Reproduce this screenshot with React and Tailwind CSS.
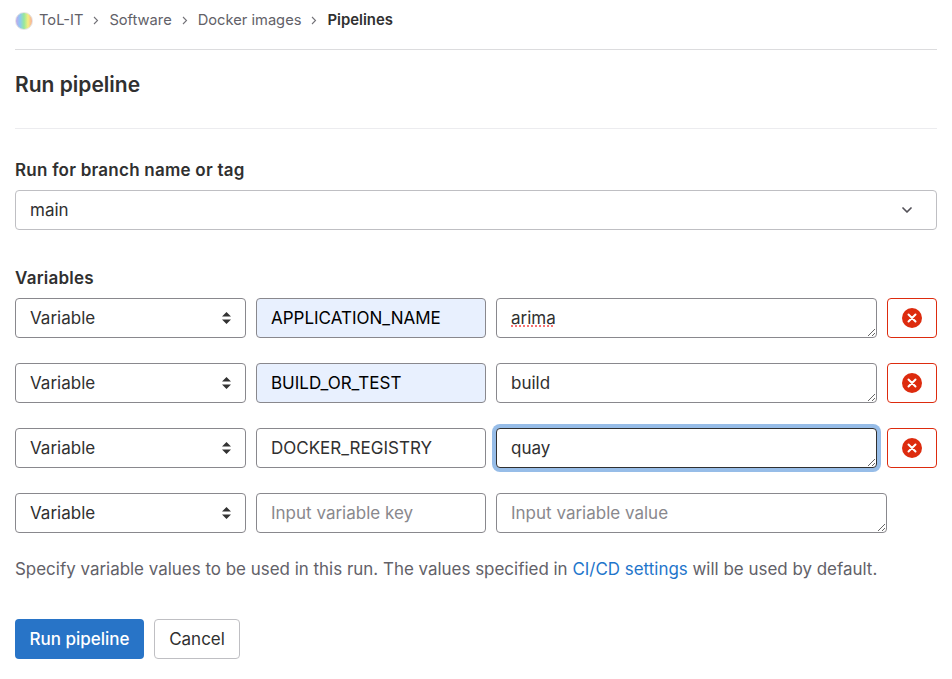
import React from "react";

const rows = [
  { name: "APPLICATION_NAME", value: "arima", autofill: true },
  { name: "BUILD_OR_TEST", value: "build", autofill: true },
  { name: "DOCKER_REGISTRY", value: "quay", focused: true },
];

const Chevron = () => (
  <svg width="6" height="9" viewBox="0 0 6 9" fill="none" className="shrink-0">
    <path d="M1 1 L4.5 4.5 L1 8" stroke="#737278" strokeWidth="1.1" />
  </svg>
);

const Crumb = ({ children }) => (
  <>
    <span>{children}</span>
    <Chevron />
  </>
);

const TypeSelect = () => (
  <div className="relative w-[231px] shrink-0">
    <select className="w-full h-10 appearance-none rounded border border-[#89888d] bg-white pl-[14px] pt-[2px] text-[17px] text-[#303030] outline-none">
      <option>Variable</option>
    </select>
    {/* up/down arrows */}
    <svg width="9" height="12" viewBox="0 0 9 12" className="absolute right-[15px] top-[14px] pointer-events-none">
      <path d="M4.5 0 L9 4.6 H0 Z M4.5 12 L0 7.4 H9 Z" fill="#333" />
    </svg>
  </div>
);

const RemoveButton = () => (
  <button className="w-[50px] h-10 shrink-0 flex items-center justify-center rounded border border-[#dd2b0e] bg-white">
    <svg width="20" height="20" viewBox="0 0 20 20">
      <circle cx="10" cy="10" r="10" fill="#dd2b0e" />
      <path d="M6.5 6.5 L13.5 13.5 M13.5 6.5 L6.5 13.5" stroke="#fff" strokeWidth="2" strokeLinecap="round" />
    </svg>
  </button>
);

export default function App() {
  return (
    <div className="min-h-[679px] bg-white px-[15px] text-[#303030] font-['Inter','Liberation_Sans',sans-serif]">
      {/* Breadcrumb */}
      <div className="h-[50px] flex items-center pb-[8px] border-b border-[#dcdcde] text-[14.7px] text-[#626168]">
        <div className="w-[18px] h-[18px] mr-[6px] rounded-full border border-[#e5e5e5] bg-[linear-gradient(90deg,#c4a8ec,#8cc8f4,#96e89c,#f4ee80,#f9ad98)]" />
        <div className="flex items-center gap-[10px]">
          <Crumb>ToL-IT</Crumb>
          <Crumb>Software</Crumb>
          <Crumb>Docker images</Crumb>
          <span className="font-semibold text-[#303030] text-[14.9px]">Pipelines</span>
        </div>
      </div>

      <h1 className="h-[79px] flex items-center pb-2 border-b border-[#ececef] text-[21px] font-semibold">Run pipeline</h1>

      {/* Branch */}
      <label className="block mt-[29px] mb-2 text-[17px] tracking-[0.24px] leading-[24px] font-semibold">Run for branch name or tag</label>
      <div className="relative">
        <select className="w-full h-10 appearance-none rounded border border-[#bfbfc3] bg-white pl-[14px] pt-[2px] text-[17px] outline-none">
          <option>main</option>
        </select>
        <svg width="10" height="6" viewBox="0 0 10 6" fill="none" className="absolute right-[25px] top-[17px] pointer-events-none">
          <path d="M1 1 L5 5 L9 1" stroke="#535158" strokeWidth="1.7" strokeLinecap="round" strokeLinejoin="round" />
        </svg>
      </div>

      {/* Variables */}
      <label className="block mt-[36px] mb-2 text-[17px] tracking-[0.24px] leading-[24px] font-semibold">Variables</label>
      <div className="flex flex-col gap-[25px]">
        {rows.map((row) => (
          <div key={row.name} className="flex gap-[10px]">
            <TypeSelect />
            <input
              readOnly
              value={row.name}
              className={`w-[230px] h-10 shrink-0 rounded border border-[#89888d] pl-[14px] text-[17px] outline-none ${row.autofill ? "bg-[#e8f0fe] text-black" : "bg-white"}`}
            />
            <textarea
              readOnly
              spellCheck="false"
              value={row.value}
              className={`flex-1 h-10 rounded border pl-[14px] pt-[7px] text-[17px] leading-[24px] outline-none bg-white ${row.focused ? "border-[#303030] ring-[4px] ring-[#97bde8]" : "border-[#89888d]"} ${row.value === "arima" ? "underline decoration-dotted decoration-[#f87171] decoration-2" : ""}`}
            />
            <RemoveButton />
          </div>
        ))}
        <div className="flex gap-[10px]">
          <TypeSelect />
          <input
            readOnly
            placeholder="Input variable key"
            className="w-[230px] h-10 shrink-0 rounded border border-[#89888d] bg-white pl-[14px] text-[17px] outline-none placeholder:text-[#89888d]"
          />
          <textarea
            readOnly
            placeholder="Input variable value"
            className="w-[391px] h-10 rounded border border-[#89888d] bg-white pl-[14px] pt-[7px] text-[17px] leading-[24px] outline-none placeholder:text-[#89888d]"
          />
        </div>
      </div>

      <p className="mt-[24px] text-[16.96px] leading-[24px] text-[#626168]">
        Specify variable values to be used in this run. The values specified in{" "}
        <a className="text-[#1f75cb]">CI/CD settings</a> will be used by default.
      </p>

      {/* Actions */}
      <div className="flex gap-[10px] mt-[38px]">
        <button className="w-[129px] h-10 pt-[2px] rounded bg-[#2874c7] text-[17px] font-medium text-white">Run pipeline</button>
        <button className="w-[86px] h-10 pt-[2px] rounded border border-[#bfbfc3] bg-white text-[17px]">Cancel</button>
      </div>
    </div>
  );
}
